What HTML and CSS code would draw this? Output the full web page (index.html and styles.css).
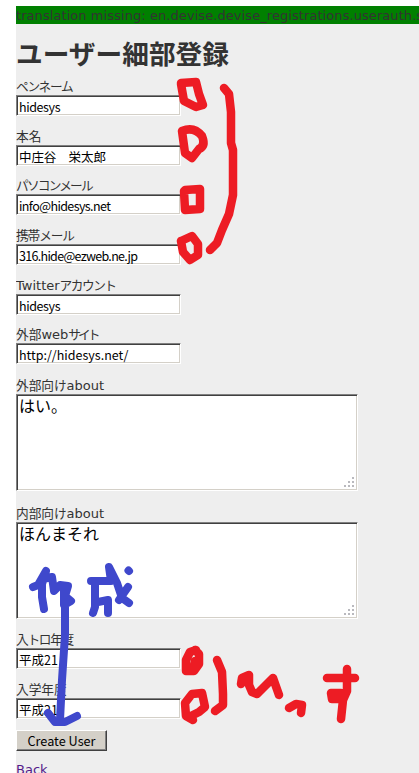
FILE: index.html
```html
<!DOCTYPE html>
<html lang="ja">
<head>
<meta charset="utf-8">
<title>ユーザー細部登録</title>
<link rel="stylesheet" href="styles.css">
</head>
<body>
<main class="page">
  <p class="notice">translation missing: en.devise.devise_registrations.userauth.signed_up</p>
  <h1>ユーザー細部登録</h1>
  <form>
    <div class="field"><label class="l-pen">ペンネーム</label><div class="input v-lat">hidesys</div></div>
    <div class="field"><label>本名</label><div class="input v-name">中庄谷　栄太郎</div></div>
    <div class="field"><label class="l-pc">パソコンメール</label><div class="input v-info">info@hidesys.net</div></div>
    <div class="field"><label class="l-mob">携帯メール</label><div class="input v-mob">316.hide@ezweb.ne.jp</div></div>
    <div class="field"><label><span class="lat">Twitter</span><span class="l-acc">アカウント</span></label><div class="input v-lat">hidesys</div></div>
    <div class="field site"><label>外部<span class="lat">web</span><span class="l-site">サイト</span></label><div class="input v-url">http://hidesys.net/</div></div>
    <div class="field area"><label>外部向<span class="l-ke">け</span><span class="lat">about</span></label><div class="input textarea">はい。<svg class="grip" width="10" height="10"><path d="M8 0h2v2h-2zM4 4h2v2h-2zM8 4h2v2h-2zM0 8h2v2h-2zM4 8h2v2h-2zM8 8h2v2h-2z"/></svg></div></div>
    <div class="field area"><label>内部向<span class="l-ke">け</span><span class="lat">about</span></label><div class="input textarea">ほんまそれ<svg class="grip" width="10" height="10"><path d="M8 0h2v2h-2zM4 4h2v2h-2zM8 4h2v2h-2zM0 8h2v2h-2zM4 8h2v2h-2zM8 8h2v2h-2z"/></svg></div></div>
    <div class="field"><label class="l-toro">入トロ年度</label><div class="input v-year">平成21</div></div>
    <div class="field last"><label class="l-year">入学年度</label><div class="input v-year">平成21</div></div>
    <button type="button">Create User</button>
  </form>
  <a class="back" href="#">Back</a>
</main>
<svg class="ink" width="419" height="773" viewBox="0 0 419 773">
  <g class="red">
    <path d="M181 83L196 82L199 94L203 105L196 107L184 101L181 84"/>
    <path d="M182 131Q194 126 202 136Q206 146 199 149L192 158L185 153L182 131"/>
    <path d="M185 190L200 189L200 209L185 210L184 191"/>
    <path d="M181 241L192 236L198 244L198 255L190 260L183 252L181 241"/>
    <path d="M224 88L229 94L231 112L231 143L233 150L233 195L229 214L222 230L217 243L210 250"/>
    <path d="M196 650L190 652L186 660L186 671L194 671L199 664L199 654L195 650M195 661L194 667"/>
    <path d="M193 720L186 716L185 703L192 694L202 693L205 707L199 712L191 716"/>
    <path d="M217 660L222 672L223 694L223 705L215 711"/>
    <path d="M241 684L242 678L249 675L249 685L252 692L257 694L273 678L279 695"/>
    <path d="M289 708L296 704L302 705L301 713"/>
    <path d="M327 678H355M347 669V691L343 700L341 719M341 693L331 693L332 699L342 699"/>
  </g>
  <g class="blue">
    <path d="M33 587L38 585L46 571L42 584L42 597L44 609M43 579L52 577L54 591L60 585L68 586L65 596L71 601L64 605V590L65 600L65 635L62 680L60 720"/>
    <path d="M48 713L55 722H65L77 716"/>
    <path d="M91 581H111L109 567L117 583L122 598L129 603M128 587L119 600M95 582V607L93 613M98 602L108 600L108 613"/>
    <path d="M128.500 570.500L129 571"/>
  </g>
</svg>
</body>
</html>
```

FILE: styles.css
```css
* { box-sizing: border-box; }
body {
  position: relative;
  height: 773px;
  margin: 0;
  padding: 6px 0 0 16px;
  overflow: hidden;
  background: #fff;
  color: #333;
  font: 13px/18px "DejaVu Sans", "Noto Sans CJK JP", sans-serif;
}
.page { height: 767px; background: #eee; overflow: hidden; }
.notice { margin: 0; height: 18px; padding-top: 1px; background: green; white-space: nowrap; letter-spacing: 0.07px; }
h1 {
  margin: 11px 0 0;
  height: 43px;
  font: bold 26.7px/35px "Noto Sans CJK JP", sans-serif;
}
.field { height: 49.7px; white-space: nowrap; }
.field label { display: block; height: 17px; line-height: 15px; font-family: "Noto Sans CJK JP", sans-serif; font-size: 12.7px; }
.field label .lat { font-family: "DejaVu Sans", sans-serif; font-size: 13px; }
.input {
  position: relative;
  width: 165px;
  height: 21px;
  padding: 1px 0 0 2px;
  background: #fff;
  border: 1px solid;
  border-color: #808080 #fff #fff #808080;
  box-shadow: inset 1px 1px #404040, inset -1px -1px #d4d0c8;
  color: #000;
  font: 12.5px/19px "Noto Sans CJK JP", sans-serif;
}
.site { height: 50.2px; }
.area { height: 128px; }
.area + .area { height: 126.3px; }
.textarea { width: 342px; height: 97px; font-size: 16px; line-height: 19px; }
.grip { position: absolute; right: 3px; bottom: 3px; fill: #b9b9be; }
.last { height: 48.5px; }
button {
  display: block;
  width: 91px;
  height: 21px;
  margin-top: 1px;
  padding: 0;
  background: #d4d0c8;
  border: 1px solid;
  border-color: #fff #404040 #404040 #fff;
  box-shadow: inset -1px -1px #808080;
  color: #000;
  font: 12.7px/18px "Noto Sans CJK JP", sans-serif;
}
.back { display: block; margin-top: 10px; color: #551a8b; }
.ink { position: absolute; left: 0; top: 0; fill: none; stroke-linecap: round; stroke-linejoin: round; }
.red { stroke: #ed1c24; stroke-width: 8.5; }
.blue { stroke: #3f48cc; stroke-width: 8; }
.l-pen { letter-spacing: -1.3px; }
.l-pc { letter-spacing: -1.8px; }
.l-mob { letter-spacing: -1.1px; }
.l-acc { letter-spacing: -1.5px; }
.l-site { letter-spacing: -3px; }
.l-ke { letter-spacing: -0.2px; }
.l-toro { letter-spacing: -1.3px; }
.v-lat { letter-spacing: -0.4px; }
.v-name { letter-spacing: -0.1px; }
.v-info { letter-spacing: -0.6px; }
.v-mob { letter-spacing: -0.7px; }
.v-url { letter-spacing: 0; }
```
